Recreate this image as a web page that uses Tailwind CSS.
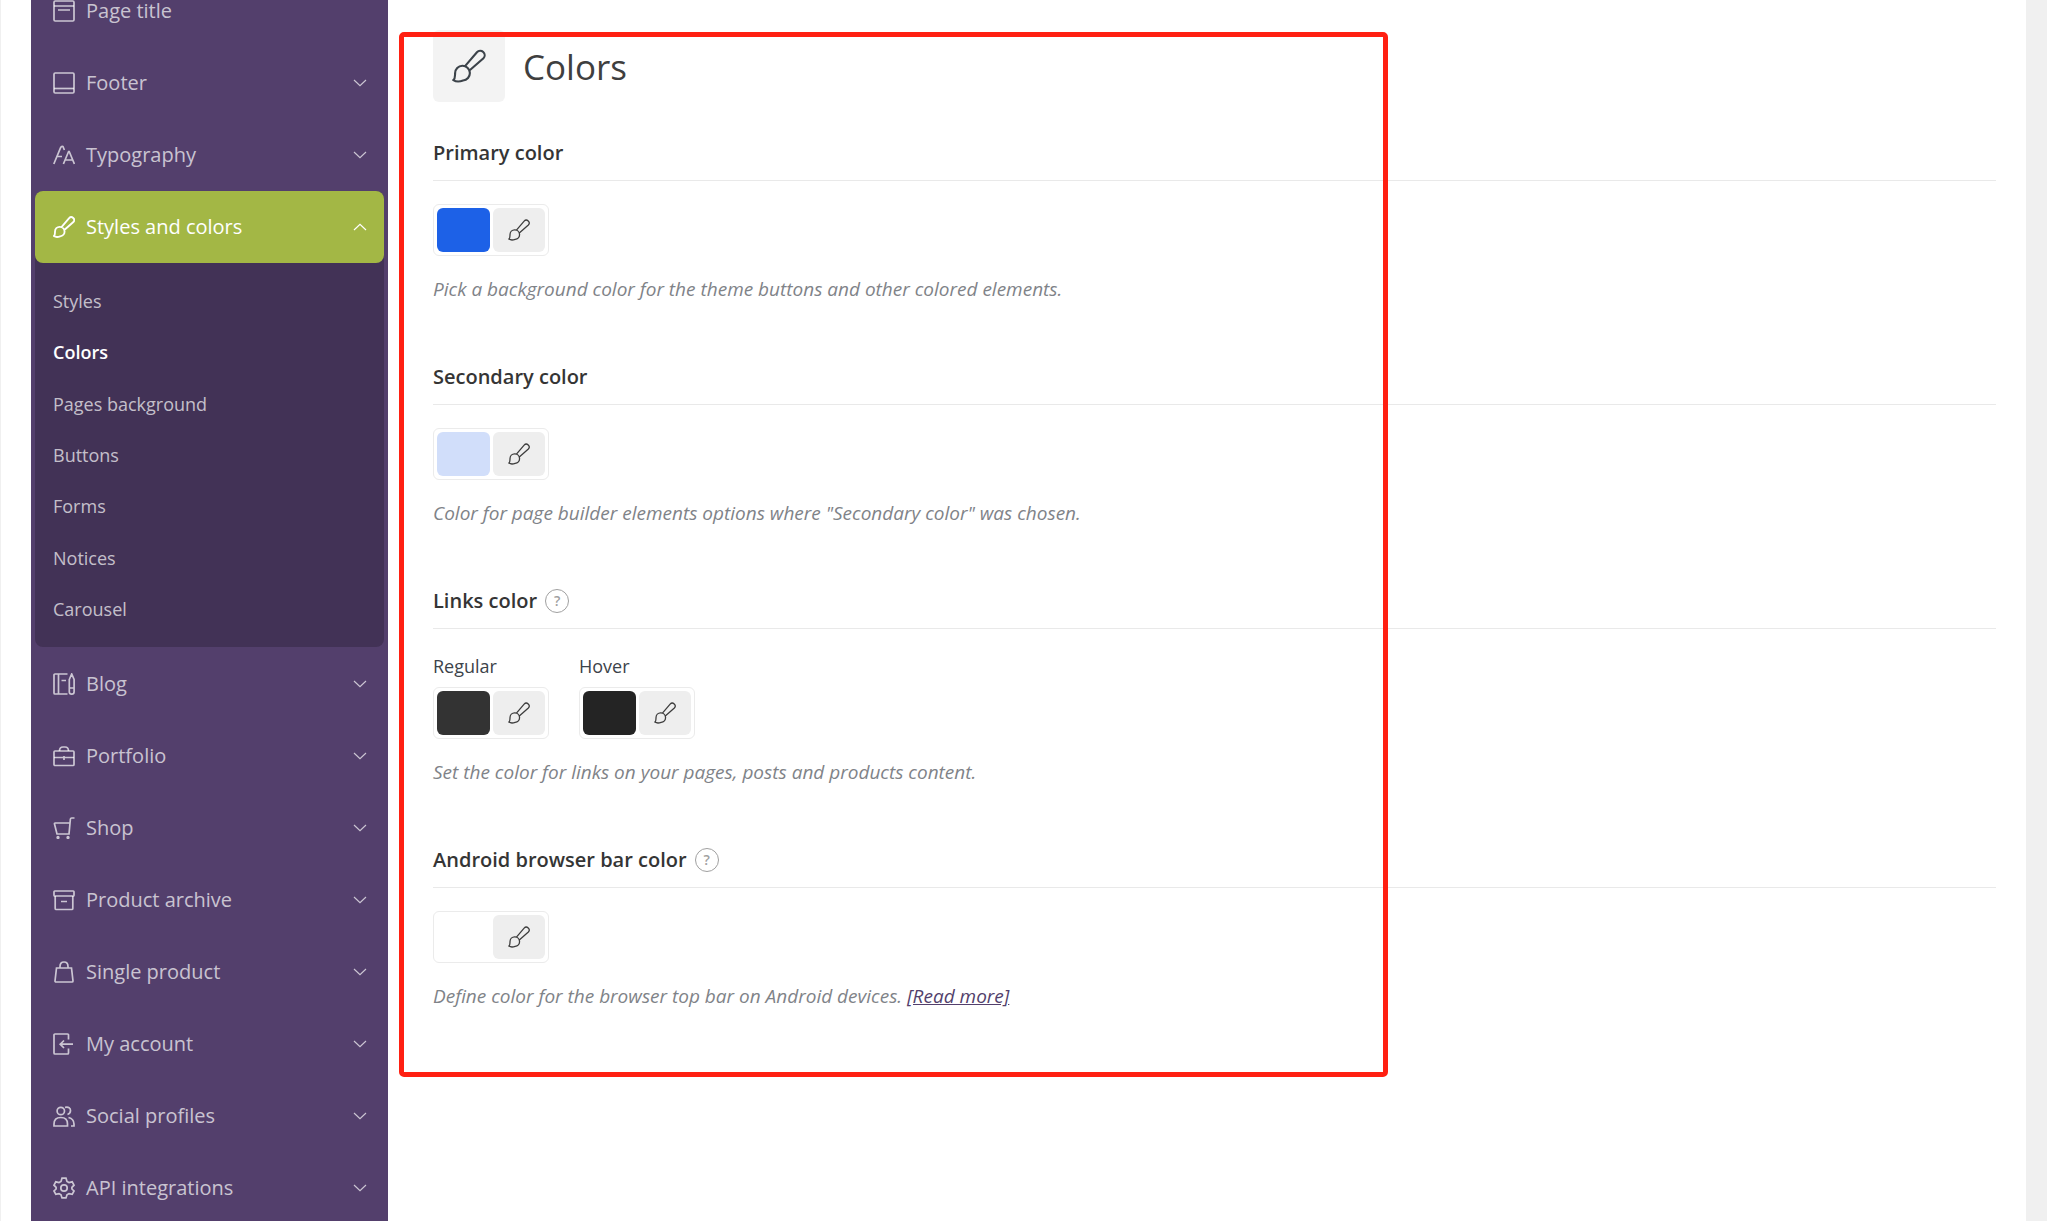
<!DOCTYPE html>
<html lang="en">
<head>
    <meta charset="UTF-8">
    <meta name="viewport" content="width=device-width, initial-scale=1.0">
    <title>Theme settings - Colors</title>
    <script src="https://cdn.jsdelivr.net/npm/@tailwindcss/browser@4"></script>
</head>
<body class="bg-[#f0f0f0] font-['Open_Sans','Noto_Sans',sans-serif] text-[#3c434a]">
    <!-- Icon sprite -->
    <svg class="hidden" aria-hidden="true">
        <symbol id="brush" viewBox="0 0 24 24"><path d="M1 21.9C2.4 20.9 2 19.3 2.2 17A5.2 5.2 0 1 1 7.8 22.2C5.2 23.2 2.6 23 1 21.9ZM9.2 12.1 17.6 2.3A3.1 3.1 0 0 1 22.2 6.6L12.3 15.2"/></symbol>
        <symbol id="down" viewBox="0 0 14 8"><path d="M1 1l6 5.7L13 1"/></symbol>
        <symbol id="up" viewBox="0 0 14 8"><path d="M1 7l6-5.7L13 7"/></symbol>
        <symbol id="page" viewBox="0 0 22 22"><rect x="1" y="1" width="20" height="20" rx="1.2"/><path d="M1 6h20M5 10h12"/></symbol>
        <symbol id="footer" viewBox="0 0 22 22"><rect x="1" y="1" width="20" height="20" rx="1.2"/><path d="M1 16.5h20"/></symbol>
        <symbol id="type" viewBox="0 0 22 22"><path d="M.8 20 7.6 3.6Q8.4 2 10 2.6L11.4 6M4.4 12.5H9M10.4 20l5.2-12.5h.6L21.4 20M12.2 16h7.4"/></symbol>
        <symbol id="blog" viewBox="0 0 22 22"><path d="M14.5 1H2Q1 1 1 2v18q0 1 1 1h12.500M5.500 1v20M8.500 7.500H13M16.300 6.500 18.700 1 21.100 6.500v12.200a2.400 2.400 0 0 1-4.800 0ZM16.300 15h4.800"/></symbol>
        <symbol id="case" viewBox="0 0 22 22"><rect x="1" y="6" width="20" height="14.5" rx="1"/><path d="M6.500 6Q6.500 2 10 2h2q3.500 0 3.500 4M1 12.500h20M11 11v4"/></symbol>
        <symbol id="cart" viewBox="0 0 22 22"><path d="M21.500 1h-2.800Q17.500 1 17.400 2L16 17H4L1.500 7Q1.200 6 2.200 6H17"/><circle cx="5" cy="20.500" r=".8"/><circle cx="15" cy="20.500" r=".8"/></symbol>
        <symbol id="archive" viewBox="0 0 22 22"><rect x="1" y="2" width="20" height="5" rx=".8"/><path d="M2.200 7v12.500q0 1 1 1h15.600q1 0 1-1V7M8 12.500h6"/></symbol>
        <symbol id="bag" viewBox="0 0 22 22"><path d="M3.500 7h15L20 20q0 1-1 1H3q-1 0-1-1ZM7 7V5.500Q7 1 11 1t4 4.500V7"/></symbol>
        <symbol id="login" viewBox="0 0 22 22"><path d="M15.500 6.500V2q0-1-1-1H2Q1 1 1 2v18q0 1 1 1h12.500q1 0 1-1v-4.500M20 11.200H7.500M11 7.500 7.200 11.200 11 15"/></symbol>
        <symbol id="users" viewBox="0 0 22 22"><circle cx="7.800" cy="6" r="3.700"/><path d="M1 21v-2q0-6.500 6.800-6.500T14.500 19v2ZM12 2.400q5.500-1 5.500 3.200 0 3-3 3.900M15.500 12.500q5.500 1.500 5.500 6.500v2h-3"/></symbol>
        <symbol id="gear" viewBox="0 0 22 22"><circle cx="11" cy="11" r="3.200"/><path d="M9 1.200h4L14 4.400 16 5.500 19.200 4.800 21 8.200 18.900 10.400V12L21 14 19.200 17.300 16 16.600 14 17.800 13 20.900H9L8 17.800 6 16.600 2.800 17.300 1 14 3.100 12V10.400L1 8.200 2.800 4.800 6 5.500 8 4.400Z"/></symbol>
    </svg>

    <div class="relative mr-[21px] flex h-screen items-start overflow-hidden border-l border-[#f0f0f0] bg-white pl-[30px]">
        <!-- Sidebar -->
        <nav class="-mt-[25px] w-[357px] shrink-0 bg-[#533f6c] px-1 pb-8 text-xl text-white/70">
            <a href="#" class="flex h-[72px] items-center gap-[11px] pr-[17px] pl-[18px]"><svg class="size-[22px] fill-none stroke-current stroke-[1.7]"><use href="#page"/></svg>Page title</a>
            <a href="#" class="flex h-[72px] items-center gap-[11px] pr-[17px] pl-[18px]"><svg class="size-[22px] fill-none stroke-current stroke-[1.7]"><use href="#footer"/></svg>Footer<svg class="ml-auto h-2 w-3.5 fill-none stroke-current stroke-[1.2]"><use href="#down"/></svg></a>
            <a href="#" class="flex h-[72px] items-center gap-[11px] pr-[17px] pl-[18px]"><svg class="size-[22px] fill-none stroke-current stroke-[1.7]"><use href="#type"/></svg>Typography<svg class="ml-auto h-2 w-3.5 fill-none stroke-current stroke-[1.2]"><use href="#down"/></svg></a>
            <div class="mb-px rounded-lg bg-[#423256]">
                <a href="#" class="flex h-[72px] items-center gap-[11px] rounded-lg bg-[#a3b745] pr-[17px] pl-[18px] text-white"><svg class="size-[22px] fill-none stroke-current stroke-[2]"><use href="#brush"/></svg>Styles and colors<svg class="ml-auto h-2 w-3.5 fill-none stroke-current stroke-[1.2]"><use href="#up"/></svg></a>
                <div class="grid h-[384px] grid-rows-7 items-center py-3 pl-[18px] text-lg">
                    <a href="#">Styles</a>
                    <a href="#" class="font-semibold text-white">Colors</a>
                    <a href="#">Pages background</a>
                    <a href="#">Buttons</a>
                    <a href="#">Forms</a>
                    <a href="#">Notices</a>
                    <a href="#">Carousel</a>
                </div>
            </div>
            <a href="#" class="flex h-[72px] items-center gap-[11px] pr-[17px] pl-[18px]"><svg class="size-[22px] fill-none stroke-current stroke-[1.7]"><use href="#blog"/></svg>Blog<svg class="ml-auto h-2 w-3.5 fill-none stroke-current stroke-[1.2]"><use href="#down"/></svg></a>
            <a href="#" class="flex h-[72px] items-center gap-[11px] pr-[17px] pl-[18px]"><svg class="size-[22px] fill-none stroke-current stroke-[1.7]"><use href="#case"/></svg>Portfolio<svg class="ml-auto h-2 w-3.5 fill-none stroke-current stroke-[1.2]"><use href="#down"/></svg></a>
            <a href="#" class="flex h-[72px] items-center gap-[11px] pr-[17px] pl-[18px]"><svg class="size-[22px] fill-none stroke-current stroke-[1.7]"><use href="#cart"/></svg>Shop<svg class="ml-auto h-2 w-3.5 fill-none stroke-current stroke-[1.2]"><use href="#down"/></svg></a>
            <a href="#" class="flex h-[72px] items-center gap-[11px] pr-[17px] pl-[18px]"><svg class="size-[22px] fill-none stroke-current stroke-[1.7]"><use href="#archive"/></svg>Product archive<svg class="ml-auto h-2 w-3.5 fill-none stroke-current stroke-[1.2]"><use href="#down"/></svg></a>
            <a href="#" class="flex h-[72px] items-center gap-[11px] pr-[17px] pl-[18px]"><svg class="size-[22px] fill-none stroke-current stroke-[1.7]"><use href="#bag"/></svg>Single product<svg class="ml-auto h-2 w-3.5 fill-none stroke-current stroke-[1.2]"><use href="#down"/></svg></a>
            <a href="#" class="flex h-[72px] items-center gap-[11px] pr-[17px] pl-[18px]"><svg class="size-[22px] fill-none stroke-current stroke-[1.7]"><use href="#login"/></svg>My account<svg class="ml-auto h-2 w-3.5 fill-none stroke-current stroke-[1.2]"><use href="#down"/></svg></a>
            <a href="#" class="flex h-[72px] items-center gap-[11px] pr-[17px] pl-[18px]"><svg class="size-[22px] fill-none stroke-current stroke-[1.7]"><use href="#users"/></svg>Social profiles<svg class="ml-auto h-2 w-3.5 fill-none stroke-current stroke-[1.2]"><use href="#down"/></svg></a>
            <a href="#" class="flex h-[72px] items-center gap-[11px] pr-[17px] pl-[18px]"><svg class="size-[22px] fill-none stroke-current stroke-[1.7]"><use href="#gear"/></svg>API integrations<svg class="ml-auto h-2 w-3.5 fill-none stroke-current stroke-[1.2]"><use href="#down"/></svg></a>
        </nav>

        <!-- Content -->
        <main class="flex grow flex-col gap-[58px] pt-[30px] pr-[30px] pl-[45px]">
            <section>
                <div class="mb-9 flex items-center gap-[18px]">
                    <div class="flex size-[72px] items-center justify-center rounded-md bg-[#f3f3f3]"><svg class="size-[34px] fill-none stroke-[#3c434a] stroke-[1.5]"><use href="#brush"/></svg></div>
                    <h1 class="pt-0.5 text-[35px] leading-10 font-medium text-[#3f3f3f]">Colors</h1>
                </div>
                <h2 class="border-b border-[#e9e9e9] pb-3 text-xl leading-[30px] font-semibold text-[#353535]">Primary color</h2>
                <div class="mt-[23px] flex h-[52px] w-[116px] gap-[3px] rounded-md border border-[#ebebeb] p-[3px]">
                    <button aria-label="Primary color value" class="grow rounded-md bg-[#1d61e7]"></button>
                    <button aria-label="Edit primary color" class="flex w-[52px] items-center justify-center rounded-md bg-[#eee]"><svg class="size-[22px] fill-none stroke-[#3c3c3c] stroke-[1.4]"><use href="#brush"/></svg></button>
                </div>
                <p class="mt-[18px] text-[19px] leading-[30px] text-[#7f8388] italic">Pick a background color for the theme buttons and other colored elements.</p>
            </section>

            <section>
                <h2 class="border-b border-[#e9e9e9] pb-3 text-xl leading-[30px] font-semibold text-[#353535]">Secondary color</h2>
                <div class="mt-[23px] flex h-[52px] w-[116px] gap-[3px] rounded-md border border-[#ebebeb] p-[3px]">
                    <button aria-label="Secondary color value" class="grow rounded-md bg-[#d1defa]"></button>
                    <button aria-label="Edit secondary color" class="flex w-[52px] items-center justify-center rounded-md bg-[#eee]"><svg class="size-[22px] fill-none stroke-[#3c3c3c] stroke-[1.4]"><use href="#brush"/></svg></button>
                </div>
                <p class="mt-[18px] text-[19px] leading-[30px] text-[#7f8388] italic">Color for page builder elements options where "Secondary color" was chosen.</p>
            </section>

            <section>
                <h2 class="flex items-center gap-2 border-b border-[#e9e9e9] pb-3 text-xl leading-[30px] font-semibold text-[#353535]">Links color <button aria-label="Help" class="flex size-6 items-center justify-center rounded-full border border-[#a0a0a0] text-sm font-semibold text-[#a0a0a0]">?</button></h2>
                <div class="mt-[22px] flex gap-[30px] text-lg leading-[30px]">
                    <div>
                        <div class="mb-1.5">Regular</div>
                        <div class="flex h-[52px] w-[116px] gap-[3px] rounded-md border border-[#ebebeb] p-[3px]">
                            <button aria-label="Regular link color value" class="grow rounded-md bg-[#333]"></button>
                            <button aria-label="Edit regular link color" class="flex w-[52px] items-center justify-center rounded-md bg-[#eee]"><svg class="size-[22px] fill-none stroke-[#3c3c3c] stroke-[1.4]"><use href="#brush"/></svg></button>
                        </div>
                    </div>
                    <div>
                        <div class="mb-1.5">Hover</div>
                        <div class="flex h-[52px] w-[116px] gap-[3px] rounded-md border border-[#ebebeb] p-[3px]">
                            <button aria-label="Hover link color value" class="grow rounded-md bg-[#242424]"></button>
                            <button aria-label="Edit hover link color" class="flex w-[52px] items-center justify-center rounded-md bg-[#eee]"><svg class="size-[22px] fill-none stroke-[#3c3c3c] stroke-[1.4]"><use href="#brush"/></svg></button>
                        </div>
                    </div>
                </div>
                <p class="mt-[18px] text-[19px] leading-[30px] text-[#7f8388] italic">Set the color for links on your pages, posts and products content.</p>
            </section>

            <section>
                <h2 class="flex items-center gap-2 border-b border-[#e9e9e9] pb-3 text-xl leading-[30px] font-semibold text-[#353535]">Android browser bar color <button aria-label="Help" class="flex size-6 items-center justify-center rounded-full border border-[#a0a0a0] text-sm font-semibold text-[#a0a0a0]">?</button></h2>
                <div class="mt-[23px] flex h-[52px] w-[116px] gap-[3px] rounded-md border border-[#ebebeb] p-[3px]">
                    <button aria-label="Android bar color value" class="grow rounded-md bg-white"></button>
                    <button aria-label="Edit Android bar color" class="flex w-[52px] items-center justify-center rounded-md bg-[#eee]"><svg class="size-[22px] fill-none stroke-[#3c3c3c] stroke-[1.4]"><use href="#brush"/></svg></button>
                </div>
                <p class="mt-[18px] text-[19px] leading-[30px] text-[#7f8388] italic">Define color for the browser top bar on Android devices. <a href="#" class="text-[#533f6c] underline">[Read more]</a></p>
            </section>
        </main>

        <!-- Highlight frame over the content -->
        <div class="pointer-events-none absolute top-8 left-[398px] h-[1045px] w-[989px] rounded-[5px] border-5 border-[#ff2012]"></div>
    </div>
</body>
</html>
